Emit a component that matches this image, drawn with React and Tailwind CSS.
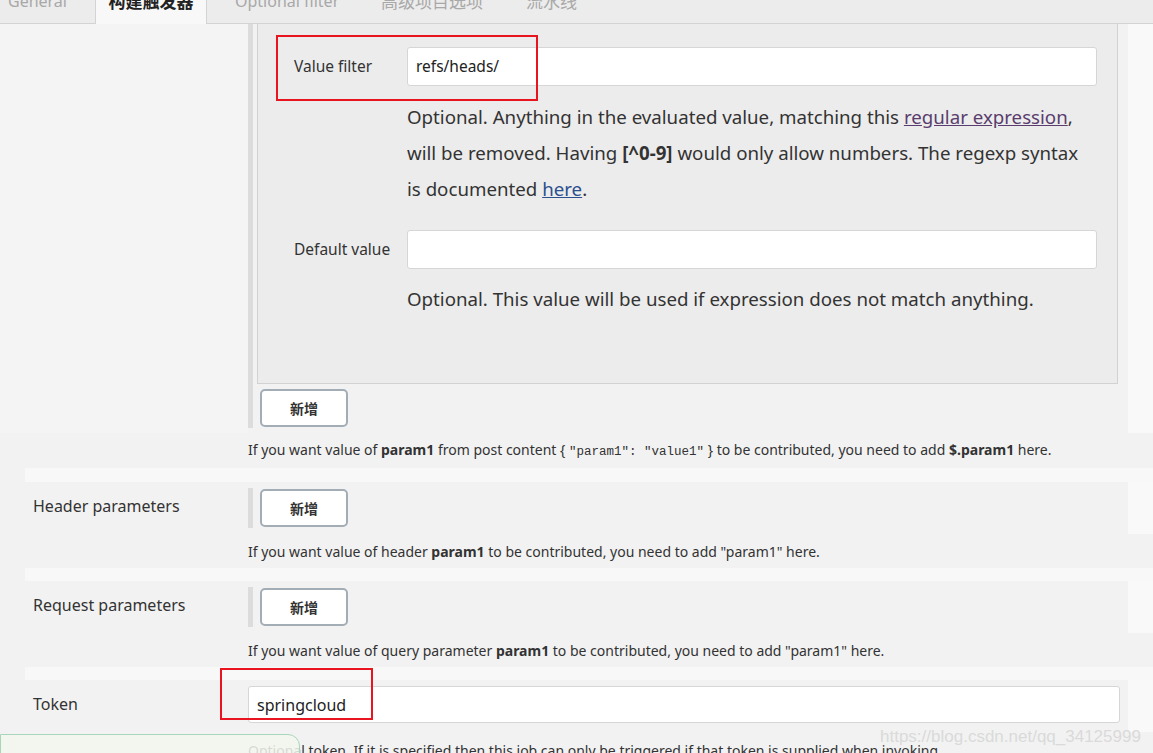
import React from "react";

function AddButton() {
  return (
    <button className="w-[88px] h-[38px] bg-white border-2 border-[#a3adb5] rounded-[5px] text-[14px] font-bold text-[#333] font-['Noto_Sans_CJK_SC',sans-serif] flex items-center justify-center">
      新增
    </button>
  );
}

function Strip() {
  return <div className="h-[13px] ml-[25px] bg-[#f8f8f8]" />;
}

function ParamRow({ label, helpText }) {
  return (
    <>
      <div className="flex h-[52px]">
        <div className="w-[248px] pl-[33px] pt-[12px] text-[16px] text-[#333]">{label}</div>
        <div className="flex-1 pt-[6px]">
          <div className="border-l-[5px] border-[#dcdcdc] pl-[7px] py-[1px] w-fit">
            <AddButton />
          </div>
        </div>
        <div className="w-[25px] bg-[#f9f9f9]" />
      </div>
      <div className="h-[34px] flex items-center pl-[248px] text-[14px] text-[#333]">{helpText}</div>
    </>
  );
}

export default function App() {
  return (
    <div className="relative w-[1153px] h-[753px] overflow-hidden bg-[#f2f2f2] text-[#333] font-['Noto_Sans','Noto_Sans_CJK_SC',sans-serif]">
      {/* Tab bar */}
      <div className="h-[24px] flex border-b border-[#d3d3d3] bg-[#ececec] text-[16px] leading-[20px]">
        <div className="w-[95px] pl-[8px] overflow-hidden">
          <div className="-mt-[9px] text-[#a8a8a8]">General</div>
        </div>
        <div className="w-[112px] h-[24px] bg-[#f8f8f8] border-x border-[#d3d3d3] overflow-hidden flex justify-center">
          <div className="-mt-[9px] font-bold text-[#222] font-['Noto_Sans_CJK_SC',sans-serif] text-[17px]">构建触发器</div>
        </div>
        <div className="w-[174px] pl-[28px] overflow-hidden">
          <div className="-mt-[9px] text-[#a8a8a8]">Optional filter</div>
        </div>
        <div className="w-[145px] overflow-hidden">
          <div className="-mt-[9px] text-[#a8a8a8] font-['Noto_Sans_CJK_SC',sans-serif] text-[17px]">高级项目选项</div>
        </div>
        <div className="flex-1 overflow-hidden">
          <div className="-mt-[9px] text-[#a8a8a8] font-['Noto_Sans_CJK_SC',sans-serif] text-[17px]">流水线</div>
        </div>
      </div>

      {/* Section 1 */}
      <div className="flex h-[409px]">
        <div className="w-[248px] bg-[#f4f4f4]" />
        <div className="flex-1 flex flex-col">
          <div className="border-l-[5px] border-[#dcdcdc] pl-[4px] pr-[10px] pb-[1px]">
            <div className="h-[360px] bg-[#ececec] border-x border-b border-[#d2d2d2] pt-[23px]">
              <div className="flex items-center">
                <div className="w-[149px] pl-[36px] text-[15.5px] text-[#333]">Value filter</div>
                <div className="w-[690px] h-[39px] bg-white border border-[#d6d6d6] rounded-[3px] flex items-center pl-[8px] text-[15.5px] text-[#222]">
                  refs/heads/
                </div>
              </div>
              <div className="mt-[13px] pl-[149px] pr-[26px] text-[18.7px] leading-[36px] text-[#333]">
                Optional. Anything in the evaluated value, matching this{" "}
                <a className="underline text-[#5a3d6e]">regular expression</a>, will be removed. Having{" "}
                <b>[^0-9]</b> would only allow numbers. The regexp syntax is documented{" "}
                <a className="underline text-[#2b4f8f]">here</a>.
              </div>
              <div className="flex items-center mt-[23px]">
                <div className="w-[149px] pl-[36px] text-[15.5px] text-[#333]">Default value</div>
                <div className="w-[690px] h-[39px] bg-white border border-[#d6d6d6] rounded-[3px]" />
              </div>
              <div className="mt-[12px] pl-[149px] text-[18.7px] leading-[36px] text-[#333]">
                Optional. This value will be used if expression does not match anything.
              </div>
            </div>
            <div className="mt-[5px] ml-[3px]">
              <AddButton />
            </div>
          </div>
        </div>
        <div className="w-[25px] bg-[#f9f9f9]" />
      </div>

      {/* Help row 1 */}
      <div className="h-[35px] flex items-center pl-[248px] text-[14px] text-[#333]">
        <span>
          If you want value of <b>param1</b> from post content {"{ "}
          <span className="font-['Liberation_Mono',monospace] text-[12.5px]">″param1″: ″value1″</span>
          {" }"} to be contributed, you need to add <b>$.param1</b> here.
        </span>
      </div>

      <div className="h-[14px] ml-[25px] bg-[#f8f8f8]" />

      <ParamRow
        label="Header parameters"
        helpText={
          <span>
            If you want value of header <b>param1</b> to be contributed, you need to add "param1" here.
          </span>
        }
      />
      <Strip />
      <ParamRow
        label="Request parameters"
        helpText={
          <span>
            If you want value of query parameter <b>param1</b> to be contributed, you need to add "param1" here.
          </span>
        }
      />
      <Strip />

      {/* Token row */}
      <div className="flex h-[52px]">
        <div className="w-[248px] pl-[33px] pt-[12px] text-[16px] text-[#333]">Token</div>
        <div className="flex-1 pt-[6px] pr-[8px]">
          <div className="h-[37px] bg-white border border-[#d6d6d6] rounded-[3px] flex items-center pl-[8px] text-[16px] text-[#222]">
            springcloud
          </div>
        </div>
        <div className="w-[25px] bg-[#f9f9f9]" />
      </div>
      <div className="pl-[248px] pt-[8px] text-[14px] text-[#333] whitespace-nowrap">
        Optional token. If it is specified then this job can only be triggered if that token is supplied when invoking.
      </div>

      {/* Overlays */}
      <div className="absolute left-0 top-[734px] w-[300px] h-[30px] border border-[#a9d6ba] rounded-tr-[12px] bg-[#f3f6ef]/85" />
      <div className="absolute left-[880px] top-[724px] text-[17px] text-[#dadada] font-['Liberation_Sans',sans-serif] whitespace-nowrap">
        https://blog.csdn.net/qq_34125999
      </div>
      <div className="absolute left-[276px] top-[35px] w-[262px] h-[66px] border-2 border-[#e8141f]" />
      <div className="absolute left-[220px] top-[668px] w-[153px] h-[52px] border-2 border-[#e8141f]" />
    </div>
  );
}
